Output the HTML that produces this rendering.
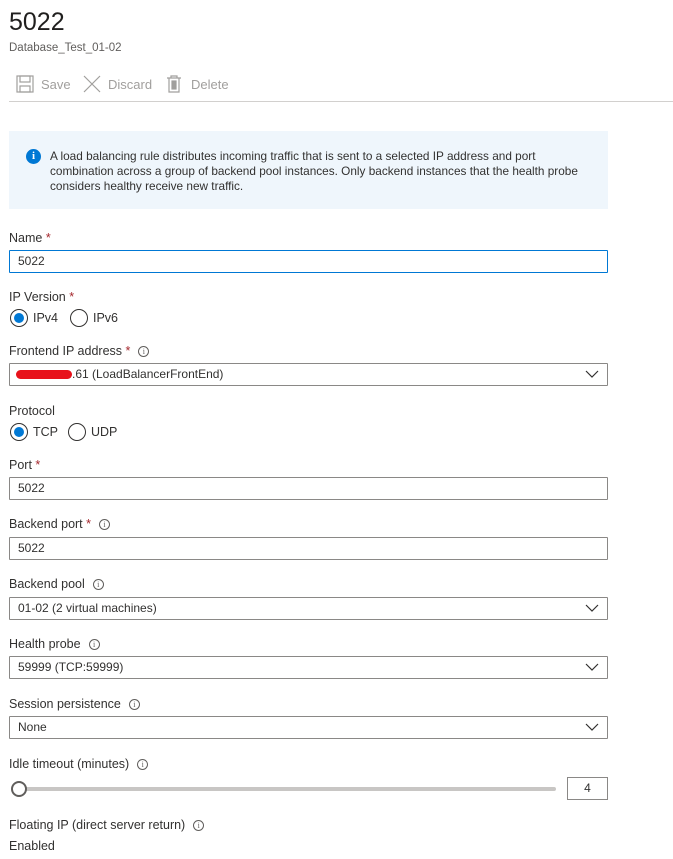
<!DOCTYPE html>
<html><head><meta charset="utf-8"><style>
*{margin:0;padding:0;box-sizing:border-box}
body{width:673px;height:859px;background:#fff;font-family:"Liberation Sans",sans-serif;color:#323130;position:relative;overflow:hidden}
.a{position:absolute;white-space:nowrap}
.lbl{font-size:12.5px;color:#323130}
.req{color:#a4262c}
.box{position:absolute;left:9px;width:599px;height:23px;border:1px solid #8a8886;border-radius:1px;font-size:12px;padding:4px 8px;line-height:13px;color:#323130}
.chev{position:absolute;right:8px;top:6px}
.info{display:inline-block;width:11px;height:11px;border:1px solid #605e5c;border-radius:50%;font-size:8px;line-height:9px;text-align:center;color:#605e5c;margin-left:8px;vertical-align:1px;font-family:"Liberation Serif",serif}
.rad{position:absolute;width:18px;height:18px;border:1px solid #323130;border-radius:50%}
.rad.on::after{content:"";position:absolute;left:3px;top:3px;width:10px;height:10px;border-radius:50%;background:#0078d4}
.rl{position:absolute;font-size:12.5px}
</style></head><body>
<div class="a" style="left:9px;top:8px;font-size:25px;color:#201f1e">5022</div>
<div class="a" style="left:9px;top:42px;font-size:11.5px;color:#605e5c">Database_Test_01-02</div>

<svg class="a" style="left:16px;top:75px" width="18" height="18" viewBox="0 0 18 18" fill="none" stroke="#a19f9d" stroke-width="1.2"><rect x="1" y="1" width="16" height="16"/><rect x="4" y="1" width="10" height="6"/><rect x="4" y="11" width="10" height="6"/></svg>
<div class="a" style="left:41px;top:77px;font-size:13px;color:#a19f9d">Save</div>
<svg class="a" style="left:83px;top:75px" width="18" height="18" stroke="#a19f9d" stroke-width="1.2"><path d="M1 1L17 17M17 1L1 17"/></svg>
<div class="a" style="left:108px;top:77px;font-size:13px;color:#a19f9d">Discard</div>
<svg class="a" style="left:166px;top:75px" width="16" height="18" fill="none" stroke="#a19f9d" stroke-width="1.2"><path d="M1 3H15M5 3V1H11V3M3 3V17H13V3"/><rect x="6" y="6" width="4" height="8" fill="#a19f9d"/></svg>
<div class="a" style="left:191px;top:77px;font-size:13px;color:#a19f9d">Delete</div>
<div class="a" style="left:9px;top:101px;width:664px;height:1px;background:#d2d0ce"></div>

<div class="a" style="left:9px;top:131px;width:599px;height:78px;background:#eff6fc"></div>
<div class="a" style="left:26px;top:149px;width:15px;height:15px;border-radius:50%;background:#0078d4;color:#fff;font-size:11px;font-weight:bold;text-align:center;line-height:15px;font-family:'Liberation Serif',serif">i</div>
<div class="a" style="left:50px;top:149px;font-size:11.8px;line-height:15px;color:#323130">A load balancing rule distributes incoming traffic that is sent to a selected IP address and port<br>combination across a group of backend pool instances. Only backend instances that the health probe<br>considers healthy receive new traffic.</div>

<div class="a lbl" style="left:9px;top:231px">Name <span class="req">*</span></div>
<div class="box" style="top:250px;border-color:#0078d4">5022</div>

<div class="a lbl" style="left:9px;top:290px">IP Version <span class="req">*</span></div>
<div class="rad on" style="left:10px;top:309px"></div><div class="rl" style="left:33px;top:311px">IPv4</div>
<div class="rad" style="left:70px;top:309px"></div><div class="rl" style="left:93px;top:311px">IPv6</div>

<div class="a lbl" style="left:9px;top:344px">Frontend IP address <span class="req">*</span><span class="info">i</span></div>
<div class="box" style="top:363px"><span style="display:inline-block;width:56px;height:9px;background:#e8121b;border-radius:5px;vertical-align:-1px;margin-left:-2px"></span>.61 (LoadBalancerFrontEnd)<svg class="chev" width="14" height="8" fill="none" stroke="#323130" stroke-width="1.2"><path d="M1 1L7 7L13 1"/></svg></div>

<div class="a lbl" style="left:9px;top:404px">Protocol</div>
<div class="rad on" style="left:10px;top:423px"></div><div class="rl" style="left:33px;top:425px">TCP</div>
<div class="rad" style="left:68px;top:423px"></div><div class="rl" style="left:91px;top:425px">UDP</div>

<div class="a lbl" style="left:9px;top:458px">Port <span class="req">*</span></div>
<div class="box" style="top:477px">5022</div>

<div class="a lbl" style="left:9px;top:517px">Backend port <span class="req">*</span><span class="info">i</span></div>
<div class="box" style="top:537px">5022</div>

<div class="a lbl" style="left:9px;top:577px">Backend pool<span class="info">i</span></div>
<div class="box" style="top:597px">01-02 (2 virtual machines)<svg class="chev" width="14" height="8" fill="none" stroke="#323130" stroke-width="1.2"><path d="M1 1L7 7L13 1"/></svg></div>

<div class="a lbl" style="left:9px;top:637px">Health probe<span class="info">i</span></div>
<div class="box" style="top:656px">59999 (TCP:59999)<svg class="chev" width="14" height="8" fill="none" stroke="#323130" stroke-width="1.2"><path d="M1 1L7 7L13 1"/></svg></div>

<div class="a lbl" style="left:9px;top:697px">Session persistence<span class="info">i</span></div>
<div class="box" style="top:716px">None<svg class="chev" width="14" height="8" fill="none" stroke="#323130" stroke-width="1.2"><path d="M1 1L7 7L13 1"/></svg></div>

<div class="a lbl" style="left:9px;top:757px">Idle timeout (minutes)<span class="info">i</span></div>
<div class="a" style="left:14px;top:787px;width:542px;height:4px;background:#c8c6c4;border-radius:2px"></div>
<div class="a" style="left:11px;top:781px;width:16px;height:16px;border:2px solid #605e5c;border-radius:50%;background:#fff"></div>
<div class="a" style="left:567px;top:777px;width:41px;height:23px;border:1px solid #8a8886;font-size:12px;text-align:center;line-height:21px">4</div>

<div class="a lbl" style="left:9px;top:818px">Floating IP (direct server return)<span class="info">i</span></div>
<div class="a" style="left:9px;top:839px;font-size:12.5px">Enabled</div>
</body></html>
